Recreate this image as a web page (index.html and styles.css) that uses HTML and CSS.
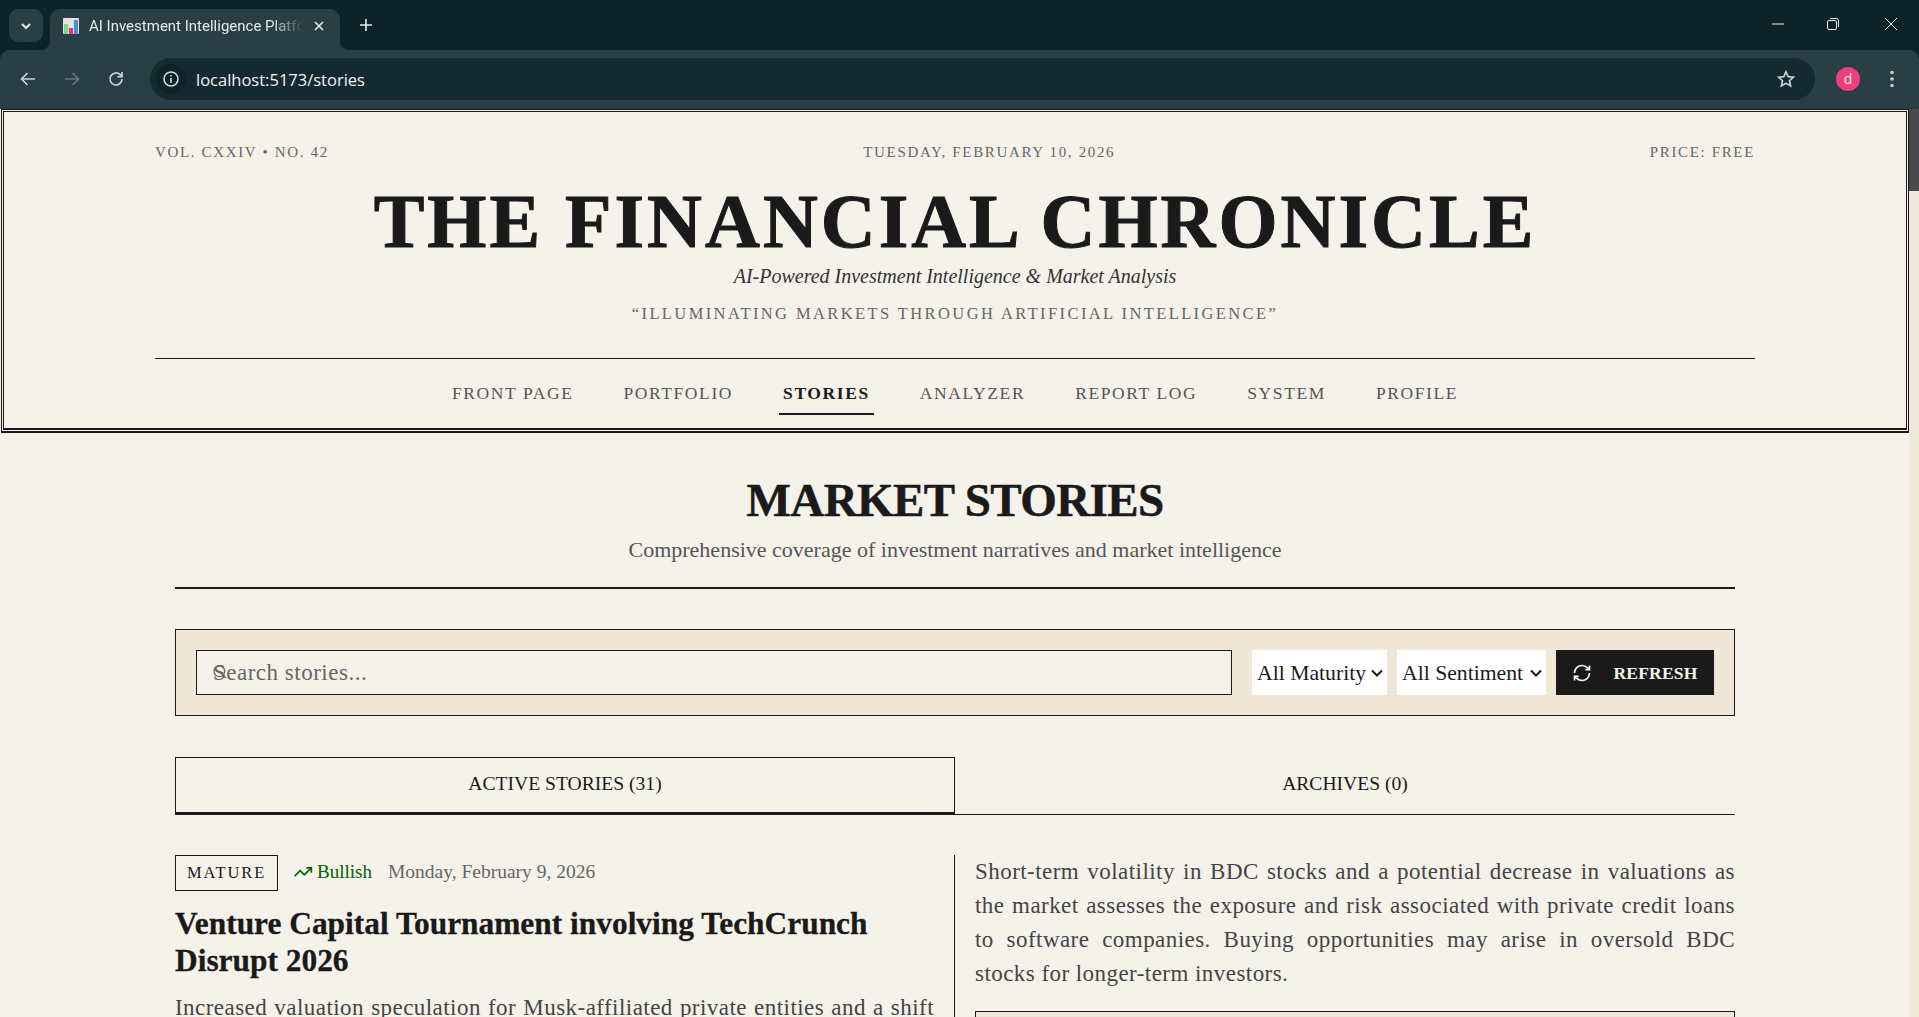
FILE: index.html
```html
<!DOCTYPE html>
<html lang="en">
<head>
    <meta charset="UTF-8">
    <meta name="viewport" content="width=device-width, initial-scale=1.0">
    <title>AI Investment Intelligence Platform</title>
    <link rel="stylesheet" href="styles.css">
</head>
<body>
    <div class="browser-chrome">
        <div class="browser-tabs">
            <div class="tab-search">
                <svg width="16" height="16" viewBox="0 0 16 16"><path d="M4 6l4 4 4-4" fill="none" stroke="#dfe6e8" stroke-width="2"/></svg>
            </div>
            <div class="tab">
                <svg class="favicon" width="16" height="16" viewBox="0 0 16 16">
                    <rect width="16" height="16" rx="1" fill="#e4e0ea"/>
                    <rect x="1" y="6" width="4" height="10" fill="#7ed47a"/>
                    <rect x="6" y="10" width="4" height="6" fill="#e8336d"/>
                    <rect x="11" y="2" width="4" height="14" fill="#3d95d8"/>
                </svg>
                <span class="tab-title">AI Investment Intelligence Platform</span>
                <svg class="tab-close" width="12" height="12" viewBox="0 0 12 12"><path d="M2 2l8 8M10 2l-8 8" stroke="#e6ecee" stroke-width="1.6"/></svg>
            </div>
            <svg class="new-tab" width="14" height="14" viewBox="0 0 14 14"><path d="M7 1v12M1 7h12" stroke="#e6ecee" stroke-width="1.6"/></svg>
            <div class="window-controls">
                <svg width="14" height="14" viewBox="0 0 14 14"><path d="M1 7h12" stroke="#f0f0f0" stroke-width="1"/></svg>
                <svg width="14" height="14" viewBox="0 0 14 14"><rect x="1.5" y="3.5" width="9" height="9" rx="1.5" fill="none" stroke="#f0f0f0"/><path d="M4 1.5h6.5a2 2 0 0 1 2 2V10" fill="none" stroke="#f0f0f0"/></svg>
                <svg class="win-close" width="14" height="14" viewBox="0 0 14 14"><path d="M1 1l12 12M13 1L1 13" stroke="#f0f0f0" stroke-width="1"/></svg>
            </div>
        </div>

        <div class="browser-toolbar">
            <svg width="20" height="20" viewBox="0 0 20 20"><path d="M17 10H4M9.5 4L3.5 10l6 6" fill="none" stroke="#c6d0d3" stroke-width="1.7"/></svg>
            <svg width="20" height="20" viewBox="0 0 20 20"><path d="M3 10h13M10.5 4l6 6-6 6" fill="none" stroke="#64767b" stroke-width="1.7"/></svg>
            <svg width="20" height="20" viewBox="0 0 20 20"><path d="M16 10a6 6 0 1 1-1.800-4.300L16 7.500M16 3v4.600h-4.600" fill="none" stroke="#c6d0d3" stroke-width="1.7"/></svg>
            <div class="omnibox">
                <div class="site-info">
                    <svg width="18" height="18" viewBox="0 0 18 18"><circle cx="9" cy="9" r="7" fill="none" stroke="#d8e0e2" stroke-width="1.5"/><path d="M9 8v5M9 5v1.600" stroke="#d8e0e2" stroke-width="1.6"/></svg>
                </div>
                <span class="url">localhost:5173/stories</span>
                <svg class="star" width="20" height="20" viewBox="0 0 20 20"><path d="M10 2.800l2.200 4.800 5.200.6-3.900 3.500 1.100 5.200L10 14.300 5.400 16.900l1.100-5.200L2.600 8.200l5.200-.6z" fill="none" stroke="#c6d0d3" stroke-width="1.7"/></svg>
            </div>
            <div class="avatar">d</div>
            <svg class="kebab" width="6" height="20" viewBox="0 0 6 20"><circle cx="3" cy="3.500" r="1.800" fill="#c6d0d3"/><circle cx="3" cy="10" r="1.800" fill="#c6d0d3"/><circle cx="3" cy="16.500" r="1.800" fill="#c6d0d3"/></svg>
        </div>
    </div>

    <div class="viewport">
        <div class="page">
            <header class="masthead">
                <div class="masthead-meta">
                    <span>VOL. CXXIV • NO. 42</span>
                    <span>TUESDAY, FEBRUARY 10, 2026</span>
                    <span>PRICE: FREE</span>
                </div>
                <h1 class="paper-title">THE FINANCIAL CHRONICLE</h1>
                <div class="paper-sub">AI-Powered Investment Intelligence &amp; Market Analysis</div>
                <div class="paper-motto">“ILLUMINATING MARKETS THROUGH ARTIFICIAL INTELLIGENCE”</div>
                <nav class="nav">
                    <a>FRONT PAGE</a>
                    <a>PORTFOLIO</a>
                    <a class="active">STORIES</a>
                    <a>ANALYZER</a>
                    <a>REPORT LOG</a>
                    <a>SYSTEM</a>
                    <a>PROFILE</a>
                </nav>
            </header>

            <main class="content">
                <div class="page-head">
                    <h2>MARKET STORIES</h2>
                    <p>Comprehensive coverage of investment narratives and market intelligence</p>
                </div>

                <div class="filters">
                    <div class="search">
                        <svg class="search-icon" width="16" height="16" viewBox="0 0 24 24"><circle cx="11" cy="11" r="8" fill="none" stroke="#666" stroke-width="2"/><path d="M21 21l-4.300-4.300" stroke="#666" stroke-width="2"/></svg>
                        <input type="text" placeholder="Search stories...">
                    </div>
                    <select class="maturity"><option>All Maturity</option></select>
                    <select class="sentiment"><option>All Sentiment</option></select>
                    <button class="refresh">
                        <svg width="20" height="20" viewBox="0 0 24 24" fill="none" stroke="#f5f2ea" stroke-width="2"><path d="M3 12a9 9 0 0 1 9-9 9.750 9.750 0 0 1 6.740 2.740L21 8"/><path d="M21 3v5h-5"/><path d="M21 12a9 9 0 0 1-9 9 9.750 9.750 0 0 1-6.740-2.740L3 16"/><path d="M8 16H3v5"/></svg>
                        REFRESH
                    </button>
                </div>

                <div class="tabs">
                    <div class="story-tab active">ACTIVE STORIES (31)</div>
                    <div class="story-tab">ARCHIVES (0)</div>
                </div>

                <article class="story">
                    <div class="story-left">
                        <div class="story-meta">
                            <span class="badge">MATURE</span>
                            <span class="sentiment-tag">
                                <svg width="20" height="20" viewBox="0 0 24 24" fill="none" stroke="#006400" stroke-width="2"><polyline points="22 7 13.500 15.500 8.500 10.500 2 17"/><polyline points="16 7 22 7 22 13"/></svg>
                                Bullish
                            </span>
                            <span class="story-date">Monday, February 9, 2026</span>
                        </div>
                        <h3>Venture Capital Tournament involving TechCrunch Disrupt 2026</h3>
                        <p>Increased valuation speculation for Musk-affiliated private entities and a shift in market attention toward late-stage startups.</p>
                    </div>
                    <div class="story-right">
                        <p>Short-term volatility in BDC stocks and a potential decrease in valuations as the market assesses the exposure and risk associated with private credit loans to software companies. Buying opportunities may arise in oversold BDC stocks for longer-term investors.</p>
                        <div class="story-box"></div>
                    </div>
                </article>
            </main>
        </div>
        <div class="scrollbar"><div class="scrollbar-thumb"></div></div>
    </div>
</body>
</html>
```

FILE: styles.css
```css
* {
    box-sizing: border-box;
}
html, body {
    margin: 0;
    height: 1017px;
    overflow: hidden;
}
body {
    background: #f5f2ea;
    color: #1a1a1a;
    font-family: "Liberation Serif", serif;
}

/* browser chrome */
.browser-chrome {
    background: #0d2329;
}
.browser-tabs {
    height: 50px;
    display: flex;
    align-items: flex-end;
}
.tab-search {
    width: 34px;
    height: 33px;
    margin: 0 0 8px 9px;
    border-radius: 9px;
    background: #2a3f45;
    display: flex;
    align-items: center;
    justify-content: center;
}
.tab {
    width: 290px;
    height: 41px;
    margin-left: 7px;
    padding: 0 15px 7px 13px;
    background: #2a3f45;
    border-radius: 10px 10px 0 0;
    display: flex;
    align-items: center;
    gap: 10px;
    position: relative;
}
.tab::before, .tab::after {
    content: "";
    position: absolute;
    bottom: 0;
    width: 10px;
    height: 10px;
}
.tab::before {
    left: -10px;
    background: radial-gradient(circle at 0 0, transparent 10px, #2a3f45 10.5px);
}
.tab::after {
    right: -10px;
    background: radial-gradient(circle at 100% 0, transparent 10px, #2a3f45 10.5px);
}
.favicon {
    flex: none;
}
.tab-title {
    flex: 1;
    overflow: hidden;
    white-space: nowrap;
    font: 15px Roboto, sans-serif;
    color: #e4eaec;
    -webkit-mask-image: linear-gradient(to right, #000 85%, transparent 100%);
    mask-image: linear-gradient(to right, #000 85%, transparent 100%);
}
.new-tab {
    margin: 0 0 18px 19px;
}
.window-controls {
    margin: 0 0 19px auto;
    display: flex;
    gap: 41px;
    padding-right: 21px;
}
.win-close {
    margin-left: 3px;
}
.browser-toolbar {
    height: 59px;
    background: #2a3f45;
    border-radius: 10px 10px 0 0;
    display: flex;
    align-items: center;
    padding: 0 24px 1px 18px;
}
.browser-toolbar > svg:nth-child(2),
.browser-toolbar > svg:nth-child(3) {
    margin-left: 24px;
}
.omnibox {
    flex: 1;
    height: 42px;
    margin: 0 21px 0 24px;
    padding: 0 19px 0 6px;
    border-radius: 21px;
    background: #152a30;
    display: flex;
    align-items: center;
}
.site-info {
    width: 30px;
    height: 30px;
    border-radius: 50%;
    background: #0d2329;
    display: flex;
    align-items: center;
    justify-content: center;
}
.url {
    margin-left: 10px;
    font: 16.5px "Open Sans", sans-serif;
    color: #eef3f4;
}
.star {
    margin-left: auto;
}
.avatar {
    width: 24px;
    height: 24px;
    border-radius: 50%;
    background: #ec407a;
    color: #fbe3ec;
    font: 14px/24px "Open Sans", sans-serif;
    text-align: center;
}
.kebab {
    margin-left: 29px;
}

/* page area */
.viewport {
    height: 908px;
    display: flex;
    overflow: hidden;
}
.page {
    flex: 1;
    min-width: 0;
}
.scrollbar {
    width: 10px;
    background: #efe9db;
}
.scrollbar-thumb {
    height: 82px;
    background: #4a4a4a;
}

/* masthead */
.masthead {
    margin-left: 1px;
    height: 324px;
    border: 3px double #1a1a1a;
    border-bottom: 5px double #1a1a1a;
    padding: 0 151px;
    text-align: center;
}
.masthead-meta {
    display: flex;
    justify-content: space-between;
    padding-top: 30px;
    font-size: 15px;
    line-height: 20px;
    letter-spacing: 1.65px;
    color: #666;
}
.paper-title {
    margin: 19px 0 0;
    font-size: 76px;
    line-height: 80px;
    font-weight: 700;
    letter-spacing: 3px;
    white-space: nowrap;
    -webkit-text-stroke: 1px #1a1a1a;
}
.paper-sub {
    margin-top: 2px;
    font-size: 20px;
    line-height: 26px;
    font-style: italic;
    color: #333;
}
.paper-motto {
    margin-top: 15px;
    font-size: 16.5px;
    line-height: 20px;
    letter-spacing: 2.4px;
    color: #666;
}
.nav {
    margin-top: 34px;
    border-top: 1px solid #1a1a1a;
    display: flex;
    justify-content: center;
    gap: 42px;
    padding-top: 22px;
}
.nav a {
    padding: 0 4px 8px;
    font-size: 17.5px;
    line-height: 24px;
    letter-spacing: 1.6px;
    color: #555;
}
.nav a.active {
    color: #1a1a1a;
    font-weight: 700;
    border-bottom: 2px solid #1a1a1a;
}

/* stories */
.content {
    padding: 0 174px 0 175px;
}
.page-head {
    height: 156px;
    border-bottom: 2px solid #1a1a1a;
    text-align: center;
    padding-top: 37px;
}
.page-head h2 {
    margin: 0;
    font-size: 47px;
    line-height: 60px;
    font-weight: 700;
    letter-spacing: -0.6px;
    -webkit-text-stroke: 0.5px #1a1a1a;
}
.page-head p {
    margin: 6px 0 0;
    font-size: 22px;
    line-height: 28px;
    color: #555;
}
.filters {
    margin-top: 40px;
    height: 87px;
    border: 1px solid #1a1a1a;
    background: #efe8d8;
    padding: 0 20px;
    display: flex;
    align-items: center;
    gap: 10px;
}
.search {
    width: 1036px;
    margin-right: 10px;
    position: relative;
}
.search input {
    width: 100%;
    height: 45px;
    border: 1px solid #1a1a1a;
    background: #f5f2ea;
    padding: 0 16px;
    font-family: "Liberation Serif", serif;
    font-size: 23px;
    letter-spacing: 0.5px;
    outline: none;
}
.search input::placeholder {
    color: #666;
}
.search-icon {
    position: absolute;
    left: 16px;
    top: 14px;
}
.filters select {
    height: 45px;
    border: none;
    border-radius: 0;
    -webkit-appearance: none;
    appearance: none;
    background: #fff url("data:image/svg+xml,%3Csvg xmlns='http://www.w3.org/2000/svg' width='12' height='8' viewBox='0 0 12 8'%3E%3Cpath d='M1 1.500l5 5 5-5' fill='none' stroke='%231a1a1a' stroke-width='2'/%3E%3C/svg%3E") no-repeat right 4px center;
    color: #1a1a1a;
    font-family: "Liberation Serif", serif;
    font-size: 21.7px;
    padding: 0 0 0 5px;
}
.maturity {
    width: 135px;
}
.sentiment {
    width: 149px;
}
.refresh {
    width: 158px;
    height: 45px;
    border: none;
    background: #1a1a1a;
    color: #f5f2ea;
    font-family: "Liberation Serif", serif;
    font-size: 17.5px;
    font-weight: 700;
    letter-spacing: 0.2px;
    padding-top: 2px;
    display: flex;
    align-items: center;
    justify-content: center;
    gap: 21px;
}
.tabs {
    margin-top: 41px;
    display: grid;
    grid-template-columns: 1fr 1fr;
}
.story-tab {
    height: 58px;
    border-bottom: 1px solid #1a1a1a;
    font-size: 19.6px;
    line-height: 54px;
    text-align: center;
}
.story-tab.active {
    border: 1px solid #1a1a1a;
    border-bottom: 3px solid #1a1a1a;
    line-height: 52px;
}
.story {
    margin-top: 40px;
    display: grid;
    grid-template-columns: 1fr 1fr;
}
.story-left {
    padding-right: 20px;
    border-right: 1px solid #1a1a1a;
}
.story-right {
    padding-left: 20px;
}
.story-meta {
    display: flex;
    align-items: center;
    height: 36px;
}
.badge {
    width: 103px;
    height: 36px;
    border: 1px solid #1a1a1a;
    font-size: 16.5px;
    line-height: 34px;
    letter-spacing: 1.9px;
    text-align: center;
}
.sentiment-tag {
    margin-left: 15px;
    margin-bottom: 2px;
    display: flex;
    align-items: center;
    gap: 4px;
    color: #006400;
    font-size: 19px;
}
.story-date {
    margin-left: 16px;
    margin-bottom: 2px;
    color: #666;
    font-size: 19.5px;
}
.story h3 {
    margin: 15px 0 0;
    font-size: 31.4px;
    line-height: 36.5px;
    font-weight: 700;
    -webkit-text-stroke: 0.3px #1a1a1a;
}
.story p {
    margin: 0;
    font-size: 23px;
    line-height: 34px;
    letter-spacing: 0.45px;
    color: #444;
    text-align: justify;
}
.story-left p {
    margin-top: 12px;
}
.story-box {
    margin-top: 20px;
    height: 200px;
    border: 1px solid #1a1a1a;
    background: #efe8d8;
}
```
